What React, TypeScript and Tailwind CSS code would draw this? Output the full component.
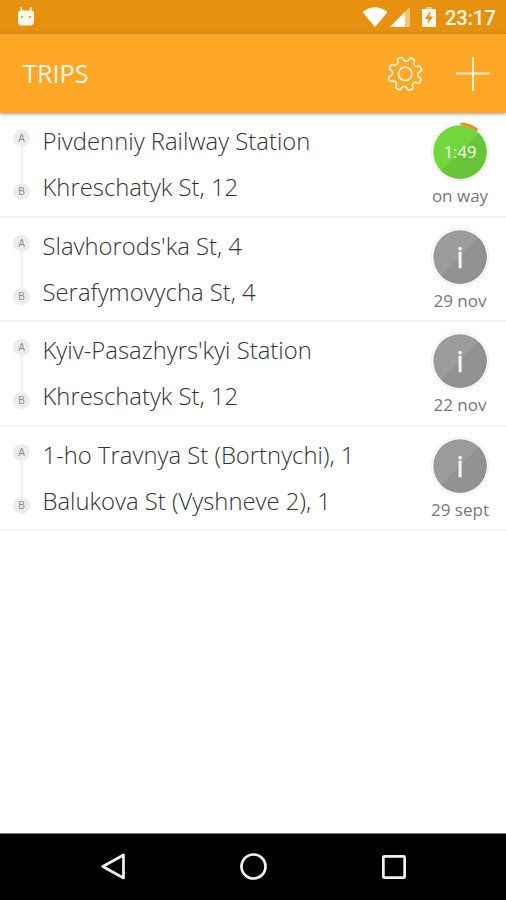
import { Fragment } from "react";

type Trip = {
  from: string;
  to: string;
  label: string;
  timer?: string;
};

const trips: Trip[] = [
  { from: "Pivdenniy Railway Station", to: "Khreschatyk St, 12", label: "on way", timer: "1:49" },
  { from: "Slavhorods'ka St, 4", to: "Serafymovycha St, 4", label: "29 nov" },
  { from: "Kyiv-Pasazhyrs'kyi Station", to: "Khreschatyk St, 12", label: "22 nov" },
  { from: "1-ho Travnya St (Bortnychi), 1", to: "Balukova St (Vyshneve 2), 1", label: "29 sept" },
];

const AndroidIcon = () => (
  <svg width="18" height="20" viewBox="0 0 18 20">
    <path d="M3.500 0l1.500 4M14.500 0L13 4" stroke="#fff8ea" strokeWidth="1.500" />
    <path d="M1 6q0-2.500 3-2.500h10q3 0 3 2.500v8.500q0 4-4 4H5q-4 0-4-4z" fill="#fff8ea" />
    <circle cx="5" cy="10" r="1" fill="#e8930f" />
    <circle cx="13" cy="10" r="1" fill="#e8930f" />
  </svg>
);

const WifiIcon = () => (
  <svg width="26" height="20" viewBox="0 0 26 20">
    <path d="M0.500 5Q13-4.500 25.500 5L13 20z" fill="#fff" />
  </svg>
);

const SignalIcon = () => (
  <svg width="20" height="20" viewBox="0 0 20 20">
    <path d="M20 0v20H0z" fill="#f3c47f" />
    <path d="M15 5v15H0z" fill="#fff" />
  </svg>
);

const BatteryIcon = () => (
  <svg width="14" height="20" viewBox="0 0 14 20">
    <path d="M4 0h6v2H4z" fill="#f3c47f" />
    <path d="M0 2h14v18H0z" fill="#fff8ea" />
    <path d="M8.500 4L3 12h3.500L5.500 17.500 11 9.500H7.500z" fill="#e8930f" />
  </svg>
);

const gearPoint = (angle: number, radius: number) => {
  const rad = (angle * Math.PI) / 180;
  return `${(18.2 + radius * Math.cos(rad)).toFixed(2)} ${(17.8 + radius * Math.sin(rad)).toFixed(2)}`;
};

// eight rounded teeth with round gaps between them
const gearPath =
  Array.from({ length: 8 }, (_, i) => {
    const a = i * 45 + 26;
    return `${i ? "L" : "M"}${gearPoint(a - 11, 14.5)}Q${gearPoint(a - 10, 16.9)} ${gearPoint(a - 4, 16.9)}L${gearPoint(a + 4, 16.9)}Q${gearPoint(a + 10, 16.9)} ${gearPoint(a + 11, 14.5)}Q${gearPoint(a + 22.5, 10.8)} ${gearPoint(a + 34, 14.5)}`;
  }).join("") + "Z";

const GearIcon = () => (
  <svg width="36" height="36" viewBox="0 0 36 36" fill="none" stroke="#fff1d6" strokeWidth="1.700" strokeLinejoin="round">
    <path d={gearPath} />
    <circle cx="18.200" cy="17.800" r="6.700" />
  </svg>
);

const PlusIcon = () => (
  <svg width="34" height="34" viewBox="0 0 34 34" stroke="#fff3dc" strokeWidth="1.900">
    <path d="M17 0v34M0 16.500h34" />
  </svg>
);

const StatusBar = () => (
  <div className="flex h-[34px] items-center bg-[#e69210] pr-[10px] pl-[17px]">
    <AndroidIcon />
    <div className="ml-auto flex items-center">
      <WifiIcon />
      <div className="ml-[2px]">
        <SignalIcon />
      </div>
      <div className="ml-[12px]">
        <BatteryIcon />
      </div>
      <span className="ml-[9px] w-[51px] pt-px font-['Roboto'] text-[20px] leading-none font-medium text-[#fff8ea]">
        23:17
      </span>
    </div>
  </div>
);

const Header = () => (
  <header className="relative flex h-[79px] items-center bg-[#ffa726] pr-[16px] pl-[23px] shadow-[0_1px_4px_rgba(60,70,100,0.55)]">
    <h1 className="pt-px text-[25.300px] leading-none text-[#fff7e8]">TRIPS</h1>
    <div className="ml-auto flex items-center gap-[33px]">
      <GearIcon />
      <PlusIcon />
    </div>
  </header>
);

const Stop = ({ letter }: { letter: string }) => (
  <span className="flex size-[17px] items-center justify-center rounded-full bg-[#ededed] pt-px font-['Liberation_Sans',sans-serif] text-[10px] leading-none text-[#8c8c8c]">
    {letter}
  </span>
);

const TripBadge = ({ timer }: { timer?: string }) => (
  <svg width="60" height="60" viewBox="0 0 60 60" textAnchor="middle">
    <circle cx="30" cy="30" r="28.500" fill="#fff" stroke="#eeeeee" strokeWidth="1.200" />
    <circle cx="30" cy="30" r="26.700" fill={timer ? "#72d63d" : "#9b9b9b"} />
    <path d="M48.900 11.100A26.700 26.700 0 0 1 11.100 48.900z" fill={timer ? "#68c53a" : "#919191"} />
    {timer ? (
      <Fragment>
        <path d="M30.500 2A28 28 0 0 1 47.500 8.200" fill="none" stroke="#f58a1f" strokeWidth="3" />
        <text x="30" y="36" fontSize="16.500" fill="#f6fff0">{timer}</text>
      </Fragment>
    ) : (
      <text x="30" y="40.500" fontSize="30" fill="#f5f5f5" stroke="#f5f5f5" strokeWidth="0.400">i</text>
    )}
  </svg>
);

const TripRow = ({ trip }: { trip: Trip }) => (
  <li className="flex h-[104.500px] border-b-2 border-[#f5f5f5] pr-[16px] pl-[13px]">
    <div className="flex w-[17px] flex-col items-center pt-[17px]">
      <Stop letter="A" />
      <span className="h-[36px] w-[2px] bg-[#f0f0f0]" />
      <Stop letter="B" />
    </div>
    <div className="ml-[12.500px] flex-1 pt-[5px] text-[23.850px] leading-[46.400px] font-light whitespace-nowrap text-[#333]">
      <p>{trip.from}</p>
      <p>{trip.to}</p>
    </div>
    <div className="flex w-[60px] flex-col items-center pt-[9px]">
      <TripBadge timer={trip.timer} />
      <span className="mt-[4px] text-[17px] leading-[20px] whitespace-nowrap text-[#777]">{trip.label}</span>
    </div>
  </li>
);

const NavigationBar = () => (
  <nav className="flex h-[67px] items-center justify-between border-t border-[#777] bg-black px-[100px]">
    <svg width="26" height="30" viewBox="0 0 26 30" fill="none" stroke="#f2f2f2" strokeWidth="2.700" strokeLinejoin="round">
      <path d="M23.500 3v23L2.800 14.500z" />
    </svg>
    <svg width="28" height="28" viewBox="0 0 28 28" fill="none" stroke="#f2f2f2" strokeWidth="2.700">
      <circle cx="13.500" cy="13.500" r="12" />
    </svg>
    <svg width="24" height="24" viewBox="0 0 24 24" fill="none" stroke="#f2f2f2" strokeWidth="2.700">
      <rect x="1.350" y="1.350" width="21.300" height="21.300" rx="1" />
    </svg>
  </nav>
);

const App = () => {
  return (
    <div className="flex h-[900px] w-[506px] flex-col bg-white font-['Open_Sans','Noto_Sans',sans-serif]">
      <StatusBar />
      <Header />
      <ul className="flex-1">
        {trips.map((trip) => (
          <TripRow key={trip.from} trip={trip} />
        ))}
      </ul>
      <NavigationBar />
    </div>
  );
};

export default App;
